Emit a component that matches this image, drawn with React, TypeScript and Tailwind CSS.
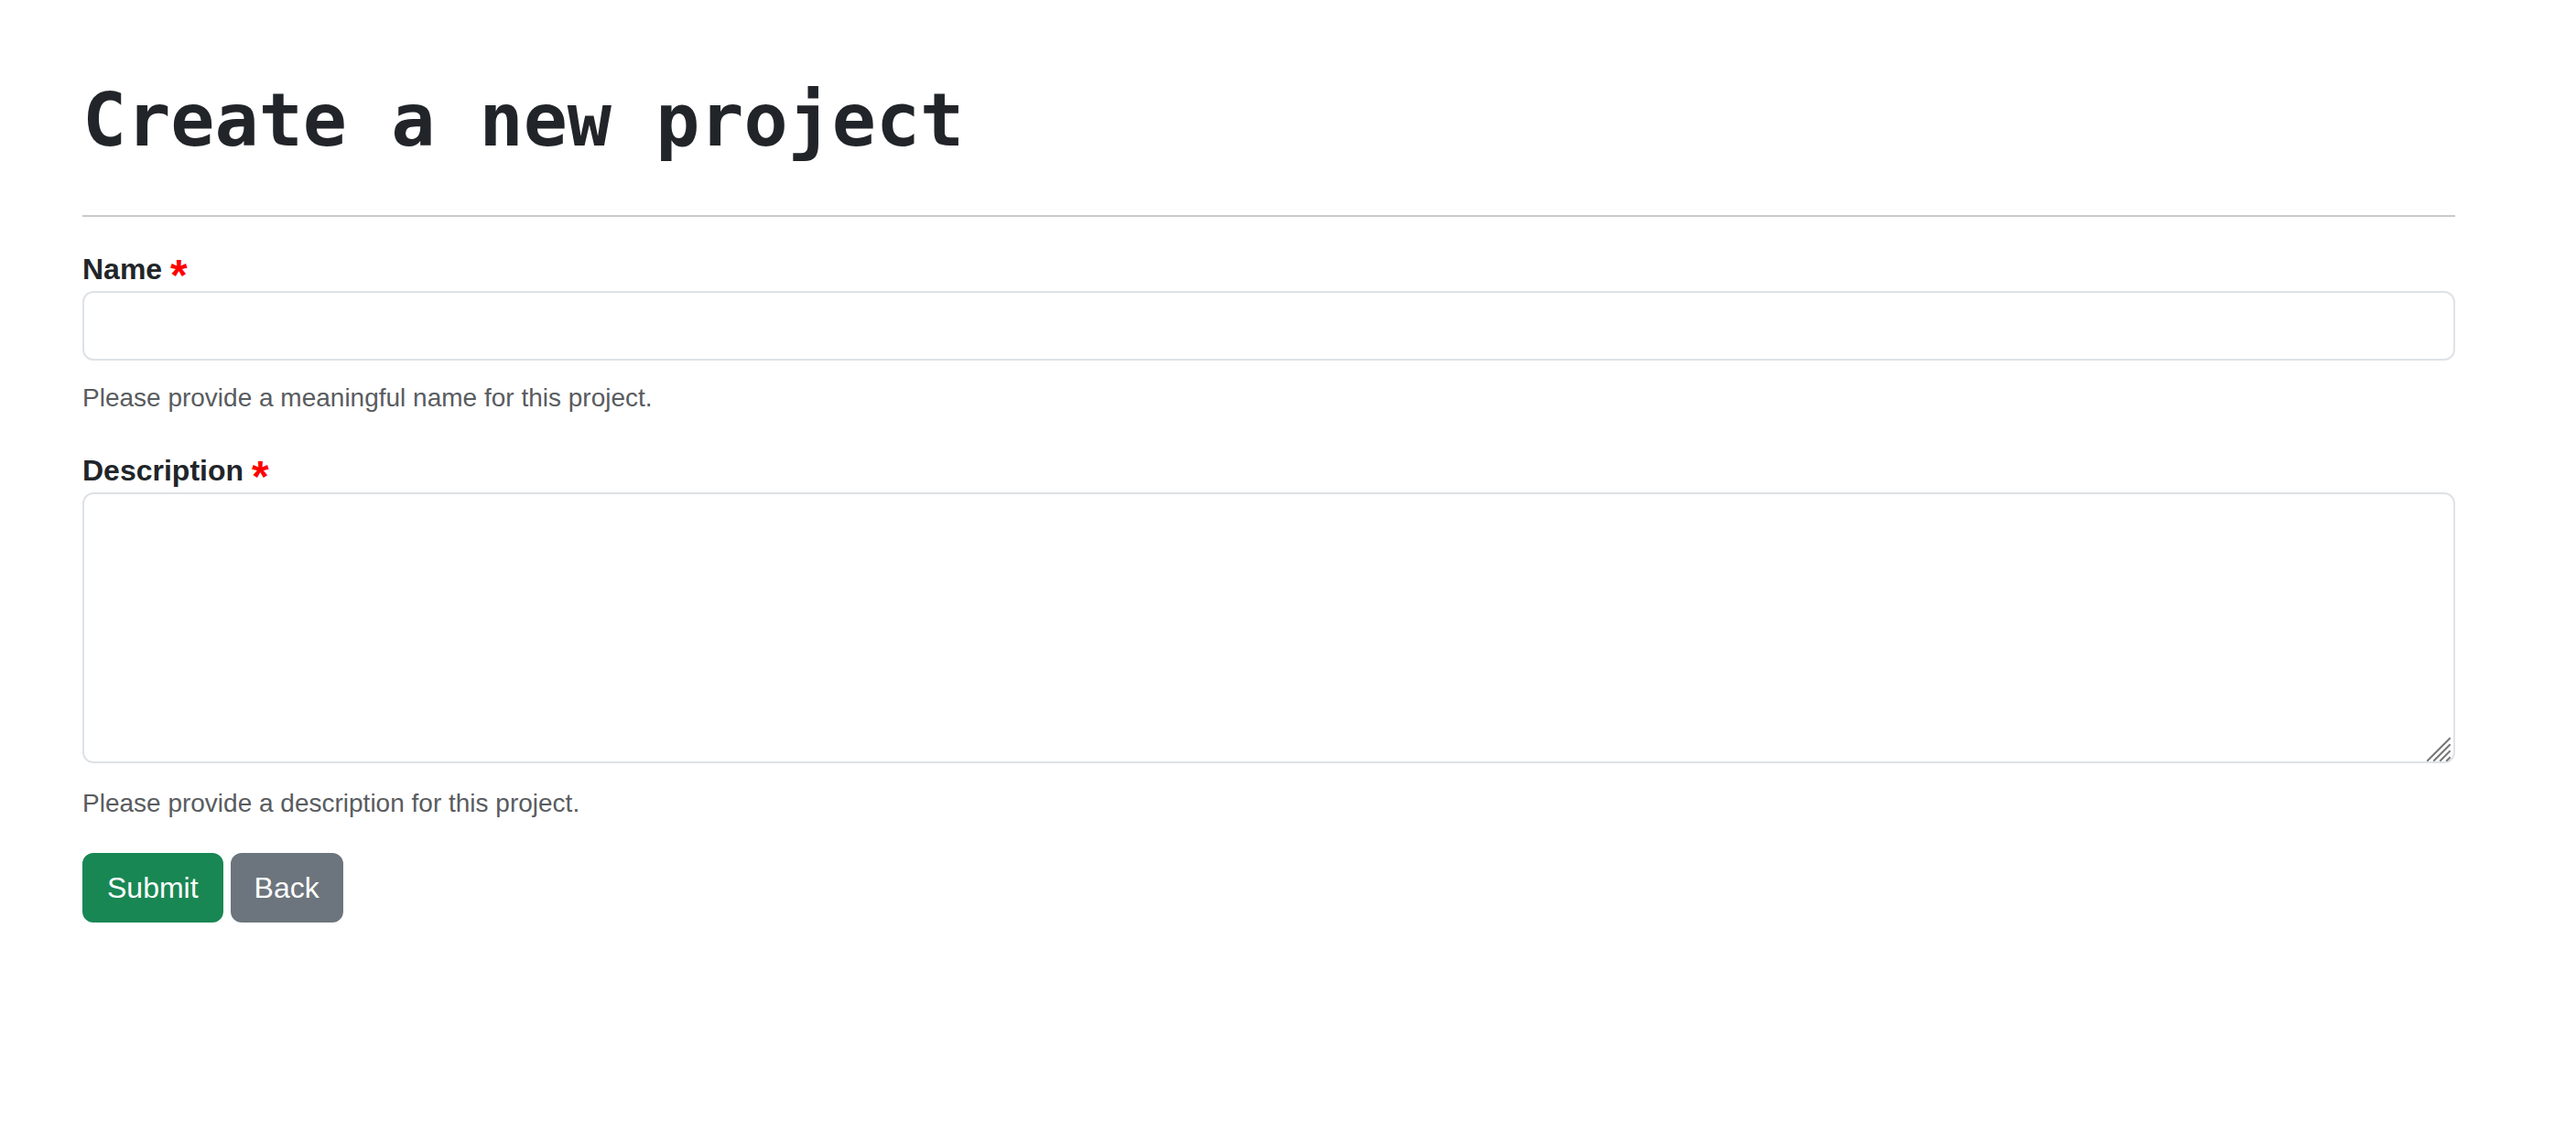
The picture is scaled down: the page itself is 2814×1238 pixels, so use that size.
import React from 'react';

function Field({ label, help, children, first }: { label: string; help: string; children: React.ReactNode; first?: boolean }) {
  return (
    <div>
      <label className={`block h-[48px] text-[32px] leading-[48px] font-bold text-[#212529] ${first ? 'mt-[33px]' : 'mt-[34px]'}`}>
        {label}{' '}
        <span className="relative top-[12px] text-[48px] leading-[0px] font-bold text-[#ff0000]">*</span>
      </label>
      {children}
      <p className={`text-[28px] leading-[42px] text-[#595c5f] ${first ? 'mt-[20px]' : 'mt-[23px]'}`}>{help}</p>
    </div>
  );
}

// Chrome's textarea grip, as drawn at this scale
function ResizeGrip() {
  return (
    <svg
      className="pointer-events-none absolute right-[4px] bottom-[2px]"
      width="28"
      height="28"
      viewBox="0 0 28 28"
      stroke="#767676"
      strokeWidth="2"
      strokeLinecap="square"
    >
      <line x1="2" y1="27" x2="26" y2="3" />
      <line x1="9" y1="27" x2="26" y2="10" />
      <line x1="16" y1="27" x2="26" y2="17" />
      <line x1="23" y1="27" x2="26" y2="24" />
    </svg>
  );
}

export default function App() {
  return (
    <div className="min-h-screen bg-white font-['Liberation_Sans',Arial,sans-serif] text-[#212529]">
      <div className="ml-[90px] w-[2592px] pt-[84px]">
        {/* Title */}
        <h1 className="font-['DejaVu_Sans_Mono','Liberation_Mono',monospace] text-[80px] leading-[96px] font-bold text-[#212529]">
          Create a new project
        </h1>
        <hr className="mt-[55px] border-0 border-t-2 border-[#c8c9ca]" />

        {/* Form */}
        <form onSubmit={(e) => e.preventDefault()}>
          <Field label="Name" help="Please provide a meaningful name for this project." first>
            <input
              type="text"
              className="block w-full h-[76px] px-[24px] text-[32px] border-2 border-[#dee2e6] rounded-[12px] bg-white outline-none"
            />
          </Field>

          <Field label="Description" help="Please provide a description for this project.">
            <div className="relative">
              <textarea className="block w-full h-[296px] px-[24px] py-[12px] text-[32px] border-2 border-[#dee2e6] rounded-[12px] bg-white outline-none resize-none" />
              <ResizeGrip />
            </div>
          </Field>

          <div className="mt-[33px] flex gap-[8px]">
            <button
              type="submit"
              className="h-[76px] px-[25px] text-[32px] leading-[48px] text-white bg-[#198754] border-2 border-[#198754] rounded-[12px]"
            >
              Submit
            </button>
            <button
              type="button"
              className="h-[76px] px-[24px] text-[32px] leading-[48px] text-white bg-[#6c757d] border-2 border-[#6c757d] rounded-[12px]"
            >
              Back
            </button>
          </div>
        </form>
      </div>
    </div>
  );
}
